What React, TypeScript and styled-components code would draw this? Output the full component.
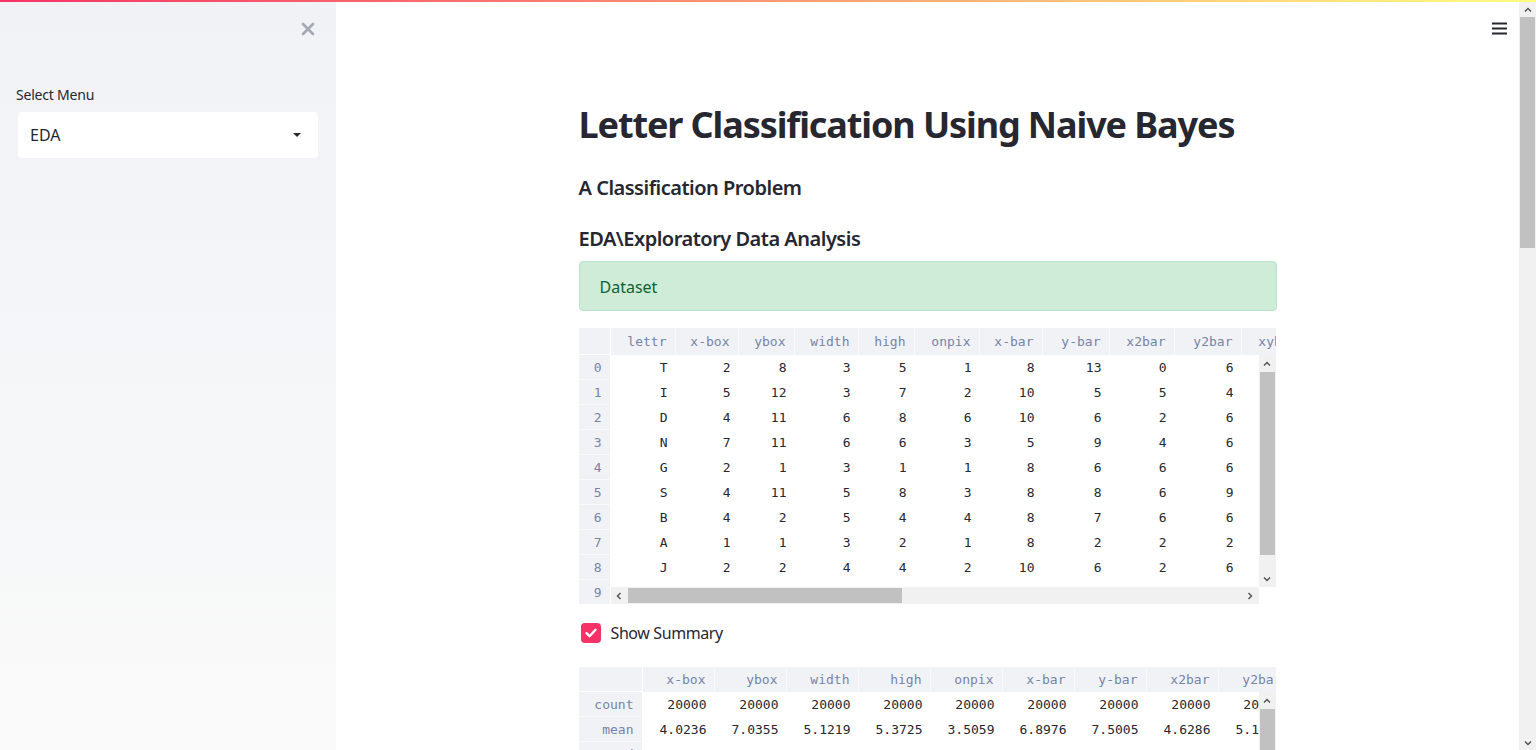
import React, { FC } from "react";
import styled, { createGlobalStyle } from "styled-components";

const COLORS = {
  text: "#262730",
  primary: "#f63366",
  sidebar: "#f0f2f6",
  headerBg: "#f0f2f6",
  headerText: "#7784a5",
  track: "#f1f1f1",
  thumb: "#c1c1c1",
  arrow: "#505050",
  white: "#ffffff",
};
const FONT = `"Noto Sans", "Open Sans", sans-serif`;
const MONO = `"DejaVu Sans Mono", "Liberation Mono", monospace`;

const GlobalStyle = createGlobalStyle`
  html, body {
    margin: 0;
    padding: 0;
    height: 100%;
    overflow: hidden;
    background: ${COLORS.white};
    font-family: ${FONT};
    color: ${COLORS.text};
  }
  * { box-sizing: border-box; }
`;

// ---- data ----
interface Column {
  name: string;
  width: number;
}

const datasetColumns: Column[] = [
  { name: "lettr", width: 65 },
  { name: "x-box", width: 63 },
  { name: "ybox", width: 56 },
  { name: "width", width: 64 },
  { name: "high", width: 56 },
  { name: "onpix", width: 65 },
  { name: "x-bar", width: 63 },
  { name: "y-bar", width: 67 },
  { name: "x2bar", width: 65 },
  { name: "y2bar", width: 67 },
  { name: "xybar", width: 65 },
  { name: "x2ybr", width: 65 },
  { name: "xy2br", width: 65 },
];

const datasetRows: string[][] = [
  "T,2,8,3,5,1,8,13,0,6,6,10,8",
  "I,5,12,3,7,2,10,5,5,4,13,3,9",
  "D,4,11,6,8,6,10,6,2,6,10,3,7",
  "N,7,11,6,6,3,5,9,4,6,4,4,10",
  "G,2,1,3,1,1,8,6,6,6,6,5,9",
  "S,4,11,5,8,3,8,8,6,9,5,6,6",
  "B,4,2,5,4,4,8,7,6,6,7,6,6",
  "A,1,1,3,2,1,8,2,2,2,8,2,8",
  "J,2,2,4,4,2,10,6,2,6,12,4,8",
  "M,11,15,13,9,7,13,2,6,2,12,1,9",
].map((r) => r.split(","));

const summaryColumns: Column[] = [
  "x-box",
  "ybox",
  "width",
  "high",
  "onpix",
  "x-bar",
  "y-bar",
  "x2bar",
  "y2bar",
  "xybar",
].map((name) => ({ name, width: 72 }));

const summaryRows: string[][] = [
  "20000,20000,20000,20000,20000,20000,20000,20000,20000,20000",
  "4.0236,7.0355,5.1219,5.3725,3.5059,6.8976,7.5005,4.6286,5.1786,8.2821",
  "1.9133,3.3046,2.0146,2.2614,2.1905,2.0260,2.3254,2.7000,2.3808,2.4885",
  "0,0,0,0,0,0,0,0,0,0",
  "3,5,4,4,2,6,6,3,4,7",
  "4,7,5,6,3,7,7,4,5,8",
  "5,9,6,7,5,8,9,6,7,10",
  "15,15,15,15,15,15,15,15,15,15",
].map((r) => r.split(","));

// ---- layout ----
const Shell = styled.div`
  display: flex;
  flex-direction: column;
  height: 100vh;
`;

const Decoration = styled.div`
  height: 2px;
  flex: 0 0 2px;
  background-image: linear-gradient(90deg, #f63366, #fffd80);
`;

const Body = styled.div`
  flex: 1;
  display: flex;
  min-height: 0;
`;

const Sidebar = styled.aside`
  flex: 0 0 336px;
  display: flex;
  flex-direction: column;
  padding: 0 16px;
  background-image: linear-gradient(180deg, #f0f2f6 0%, #fafafa 100%);
`;

const CloseRow = styled.div`
  display: flex;
  justify-content: flex-end;
  padding: 19px 4px 0 0;
`;

const SideLabel = styled.label`
  margin-top: 48px;
  font-size: 14px;
  line-height: 20px;
  letter-spacing: -0.2px;
`;

const SelectBox = styled.div`
  margin: 7px 2px 0;
  height: 46px;
  display: flex;
  align-items: center;
  justify-content: space-between;
  padding: 0 16px 0 12px;
  background: ${COLORS.white};
  border-radius: 4px;
  font-size: 16px;
`;

const Main = styled.main`
  position: relative;
  flex: 1;
  overflow: hidden;
`;

const MenuButton = styled.div`
  position: absolute;
  top: 20px;
  right: 12px;
  display: flex;
`;

const Content = styled.div`
  width: 698px;
  margin: 0 auto;
  padding-top: 97px;
  display: flex;
  flex-direction: column;
`;

const Title = styled.h1`
  margin: 0;
  font-size: 36px;
  line-height: 52px;
  font-weight: 700;
  letter-spacing: -1.1px;
`;

const SubHeader = styled.h3<{ $gap: number }>`
  margin: ${(p) => p.$gap}px 0 0;
  font-size: 20px;
  line-height: 30px;
  font-weight: 600;
  letter-spacing: -0.5px;
`;

const Alert = styled.div`
  margin-top: 7px;
  padding: 13px 20px 11px;
  border: 1px solid #b9e2c6;
  border-radius: 4px;
  background: #cfecd8;
  color: #0e6130;
  font-size: 16px;
  line-height: 24px;
`;

const CheckRow = styled.label`
  margin-top: 19px;
  display: flex;
  align-items: center;
  gap: 10px;
  padding-left: 2px;
  font-size: 16px;
  line-height: 20px;
  letter-spacing: -0.4px;
`;

const CheckBox = styled.span`
  width: 20px;
  height: 20px;
  border-radius: 4px;
  background: ${COLORS.primary};
  display: flex;
  align-items: center;
  justify-content: center;
`;

// ---- dataframe ----
const Frame = styled.div<{ $index: number; $head: number; $body: number; $top: number }>`
  margin-top: ${(p) => p.$top}px;
  display: grid;
  grid-template-columns: ${(p) => p.$index}px 1fr 17px;
  grid-template-rows: ${(p) => p.$head}px ${(p) => p.$body}px 17px;
  width: 697px;
  font-family: ${MONO};
  font-size: 13px;
  flex-shrink: 0;
`;

const Corner = styled.div`
  background: ${COLORS.headerBg};
  border-right: 1px solid ${COLORS.white};
  border-bottom: 1px solid ${COLORS.white};
`;

const HeaderRow = styled.div`
  grid-column: 2 / 4;
  display: flex;
  overflow: hidden;
  background: ${COLORS.headerBg};
`;

const HeaderCell = styled.div<{ $w: number; $h: number }>`
  flex: 0 0 ${(p) => p.$w}px;
  text-align: right;
  padding: 1px 8px 0 0;
  line-height: ${(p) => p.$h - 1}px;
  color: ${COLORS.headerText};
  border-right: 1px solid #f8f9fb;
  white-space: nowrap;
`;

const IndexCol = styled.div`
  grid-column: 1;
  grid-row: 2 / 4;
  overflow: hidden;
  background: ${COLORS.headerBg};
  border-right: 1px solid ${COLORS.white};
`;

const IndexCell = styled.div`
  height: 25px;
  line-height: 25px;
  text-align: right;
  padding-right: 8px;
  color: ${COLORS.headerText};
  border-bottom: 1px solid #f8f9fb;
`;

const Cells = styled.div`
  grid-column: 2;
  grid-row: 2;
  overflow: hidden;
`;

const Row = styled.div`
  display: flex;
  height: 25px;
`;

const Cell = styled.div<{ $w: number }>`
  flex: 0 0 ${(p) => p.$w}px;
  text-align: right;
  padding-right: 8px;
  line-height: 25px;
  white-space: nowrap;
  color: ${COLORS.text};
`;

const ScrollCorner = styled.div`
  grid-column: 3;
  grid-row: 3;
  background: ${COLORS.white};
`;

// ---- scrollbars ----
const Track = styled.div<{ $v: boolean }>`
  display: flex;
  flex-direction: ${(p) => (p.$v ? "column" : "row")};
  background: ${COLORS.track};
  ${(p) => (p.$v ? "width: 17px; height: 100%;" : "height: 17px; width: 100%;")}
  overflow: hidden;
`;

const Arrow = styled.div<{ $size: number }>`
  flex: 0 0 ${(p) => p.$size}px;
  display: flex;
  align-items: center;
  justify-content: center;
`;

const Gap = styled.div<{ $size?: number }>`
  flex: ${(p) => (p.$size === undefined ? "1 1 0" : `0 0 ${p.$size}px`)};
`;

const Thumb = styled.div<{ $v: boolean; $size: number }>`
  flex: 0 0 ${(p) => p.$size}px;
  background: ${COLORS.thumb};
  margin: ${(p) => (p.$v ? "0 1px" : "1px 0")};
`;

const Chevron: FC<{ dir: "up" | "down" | "left" | "right" }> = ({ dir }) => {
  const rot = { up: 0, right: 90, down: 180, left: 270 }[dir];
  return (
    <svg width="8" height="8" viewBox="0 0 8 8" style={{ transform: `rotate(${rot}deg)` }}>
      <polyline points="1,5.5 4,2.5 7,5.5" fill="none" stroke={COLORS.arrow} strokeWidth="1.4" />
    </svg>
  );
};

const ScrollBar: FC<{ vertical?: boolean; start: number; size: number; arrow?: number }> = ({
  vertical = false,
  start,
  size,
  arrow = 17,
}) => (
  <Track $v={vertical}>
    <Arrow $size={arrow}>
      <Chevron dir={vertical ? "up" : "left"} />
    </Arrow>
    <Gap $size={start} />
    <Thumb $v={vertical} $size={size} />
    <Gap />
    <Arrow $size={arrow}>
      <Chevron dir={vertical ? "down" : "right"} />
    </Arrow>
  </Track>
);

interface DataFrameProps {
  columns: Column[];
  index: string[];
  rows: string[][];
  indexWidth: number;
  headHeight: number;
  bodyHeight: number;
  top: number;
  vThumb: number;
  hThumb: number;
}

const DataFrame: FC<DataFrameProps> = ({
  columns,
  index,
  rows,
  indexWidth,
  headHeight,
  bodyHeight,
  top,
  vThumb,
  hThumb,
}) => (
  <Frame $index={indexWidth} $head={headHeight} $body={bodyHeight} $top={top}>
    <Corner />
    <HeaderRow>
      {columns.map((c) => (
        <HeaderCell key={c.name} $w={c.width} $h={headHeight}>
          {c.name}
        </HeaderCell>
      ))}
    </HeaderRow>
    <IndexCol>
      {index.map((i) => (
        <IndexCell key={i}>{i}</IndexCell>
      ))}
    </IndexCol>
    <Cells>
      {rows.map((r, ri) => (
        <Row key={ri}>
          {r.map((v, ci) => (
            <Cell key={ci} $w={columns[ci].width}>
              {v}
            </Cell>
          ))}
        </Row>
      ))}
    </Cells>
    <ScrollBar vertical start={0} size={vThumb} />
    <ScrollBar start={0} size={hThumb} />
    <ScrollCorner />
  </Frame>
);

const PageScroll = styled.div`
  flex: 0 0 17px;
  display: flex;
`;

const App: FC = () => {
  return (
    <Shell>
      <GlobalStyle />
      <Decoration />
      <Body>
        <Sidebar>
          <CloseRow>
            <svg width="16" height="16" viewBox="0 0 16 16">
              <path d="M3 3 L13 13 M13 3 L3 13" stroke="#a3a8b4" strokeWidth="2.6" strokeLinecap="round" />
            </svg>
          </CloseRow>
          <SideLabel>Select Menu</SideLabel>
          <SelectBox>
            <span>EDA</span>
            <svg width="10" height="6" viewBox="0 0 10 6">
              <path d="M1 1 L9 1 L5 5 Z" fill={COLORS.text} />
            </svg>
          </SelectBox>
        </Sidebar>
        <Main>
          <MenuButton>
            <svg width="15" height="13" viewBox="0 0 15 13">
              <rect x="0" y="0.5" width="15" height="2" fill={COLORS.text} />
              <rect x="0" y="5.5" width="15" height="2" fill={COLORS.text} />
              <rect x="0" y="10.5" width="15" height="2" fill={COLORS.text} />
            </svg>
          </MenuButton>
          <Content>
            <Title>Letter Classification Using Naive Bayes</Title>
            <SubHeader $gap={22}>A Classification Problem</SubHeader>
            <SubHeader $gap={21}>EDA\Exploratory Data Analysis</SubHeader>
            <Alert>Dataset</Alert>
            <DataFrame
              top={17}
              columns={datasetColumns}
              index={datasetRows.map((_, i) => String(i))}
              rows={datasetRows}
              indexWidth={32}
              headHeight={27}
              bodyHeight={232}
              vThumb={183}
              hThumb={274}
            />
            <CheckRow>
              <CheckBox>
                <svg width="14" height="14" viewBox="0 0 14 14">
                  <polyline
                    points="2.5,7.2 5.6,10.2 11.5,3.8"
                    fill="none"
                    stroke={COLORS.white}
                    strokeWidth="2.4"
                    strokeLinecap="round"
                    strokeLinejoin="round"
                  />
                </svg>
              </CheckBox>
              Show Summary
            </CheckRow>
            <DataFrame
              top={24}
              columns={summaryColumns}
              index={["count", "mean", "std", "min", "25%", "50%", "75%", "max"]}
              rows={summaryRows}
              indexWidth={64}
              headHeight={25}
              bodyHeight={200}
              vThumb={160}
              hThumb={300}
            />
          </Content>
        </Main>
        <PageScroll>
          <ScrollBar vertical start={0} size={231} arrow={15} />
        </PageScroll>
      </Body>
    </Shell>
  );
};

export default App;
